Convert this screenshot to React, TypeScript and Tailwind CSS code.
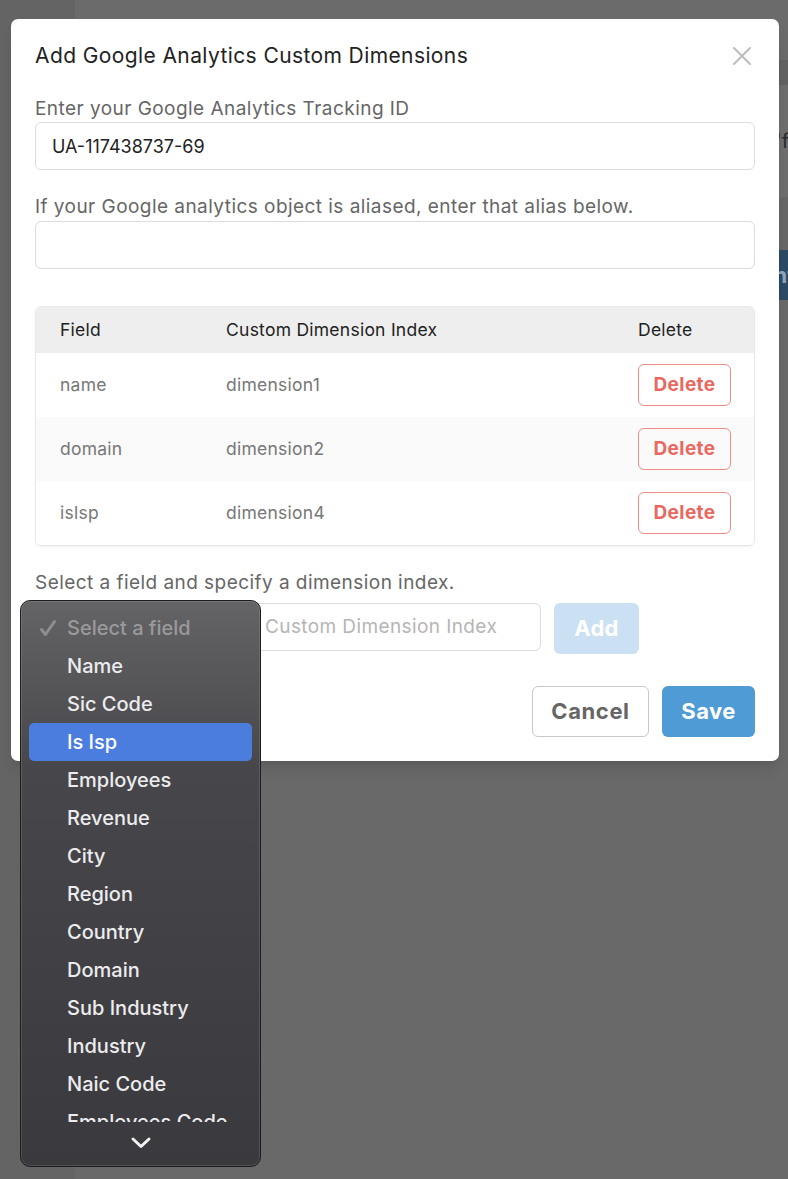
import React from "react";

const rows = [
  { field: "name", index: "dimension1" },
  { field: "domain", index: "dimension2" },
  { field: "isIsp", index: "dimension4", label: "islsp" },
];

const options = [
  "Name",
  "Sic Code",
  "Is Isp",
  "Employees",
  "Revenue",
  "City",
  "Region",
  "Country",
  "Domain",
  "Sub Industry",
  "Industry",
  "Naic Code",
  "Employees Code",
];

const FieldMenu = () => {
  return (
    <div className="absolute left-[20px] top-[600px] flex h-[567px] w-[241px] flex-col overflow-hidden rounded-[10px] border border-[#1c1c1e] bg-gradient-to-b from-[#646466] via-[#47474b] via-30% to-[#3a393e] shadow-[inset_0_0_0_1px_rgba(255,255,255,0.12)] font-['Inter',sans-serif]">
      <div className="h-[521px] shrink-0 overflow-hidden px-[8px] pt-[8px]">
        <div className="flex h-[38px] items-center text-[20px] font-medium text-[#9a9a9c]">
          <span className="flex w-[38px] justify-center">
            <svg width="20" height="20" viewBox="0 0 20 20" fill="none">
              <path d="M3.5 11.5 L7.5 16.5 L16.5 3.5" stroke="#8e8e90" strokeWidth="3" strokeLinecap="round" strokeLinejoin="round" />
            </svg>
          </span>
          Select a field
        </div>
        {options.map((o) => (
          <div
            key={o}
            className={
              o === "Is Isp"
                ? "flex h-[38px] items-center rounded-[5px] bg-[#4b7ddf] pl-[38px] text-[20px] font-medium text-white"
                : "flex h-[38px] items-center pl-[38px] text-[20px] font-medium text-[#ececee]"
            }
          >
            {o}
          </div>
        ))}
      </div>
      <div className="flex flex-1 items-center justify-center pb-[2px]">
        <svg width="22" height="14" viewBox="0 0 22 14" fill="none">
          <path d="M3 3 L11 10.5 L19 3" stroke="#f2f2f2" strokeWidth="3" strokeLinecap="round" strokeLinejoin="round" />
        </svg>
      </div>
    </div>
  );
};

const App = () => {
  return (
    <div className="relative h-[1179px] w-full overflow-hidden bg-[#6b6b6b] font-['Inter',sans-serif]">
      {/* dimmed page behind the modal */}
      <div className="flex h-full">
        <div className="w-[75px] bg-[#646464]" />
        <div className="flex flex-1 flex-col">
          <div className="h-[60px]" />
          <div className="h-[25px] bg-[#626262]" />
          <div className="flex h-[112px] items-center justify-end bg-[#6e6e6e] pr-0 text-[20px] text-[#2a2a2a]">
            <span className="-mr-[6px]">'fi</span>
          </div>
          <div className="h-[53px] bg-[#676767]" />
          <div className="flex h-[50px] items-center justify-end bg-[#2c4a66] text-[22px] font-bold text-[#8fa6bd]">
            <span className="-mr-[8px]">nf</span>
          </div>
          <div className="flex-1 bg-[#696969]" />
        </div>
      </div>

      <div className="absolute left-[11px] top-[19px] w-[768px] rounded-[7px] bg-white px-6 pb-6 pt-[23px] shadow-lg">
        <div className="flex h-[28px] items-center justify-between">
          <h2 className="text-[21px] font-normal tracking-[0.4px] text-[#222]">
            Add Google Analytics Custom Dimensions
          </h2>
          <svg width="20" height="20" viewBox="0 0 20 20" className="mr-[3px]" fill="none">
            <path d="M2 2 L18 18 M18 2 L2 18" stroke="#bdbdbd" strokeWidth="2" strokeLinecap="round" />
          </svg>
        </div>

        <label className="mt-[27px] block text-[19px] leading-[24px] tracking-[0.45px] text-[#666]">
          Enter your Google Analytics Tracking ID
        </label>
        <div className="mt-[1px] flex h-[48px] items-center rounded-[6px] border border-[#dcdcdc] px-4 text-[18px] text-[#222]">
          UA-117438737-69
        </div>

        <label className="mt-[25px] block text-[19px] leading-[24px] tracking-[0.45px] text-[#666]">
          If your Google analytics object is aliased, enter that alias below.
        </label>
        <div className="mt-[2px] h-[48px] rounded-[6px] border border-[#dcdcdc]" />

        <div className="mt-[37px] overflow-hidden rounded-[6px] border border-[#e8e8e8] shadow-[0_1px_2px_rgba(0,0,0,0.06)]">
          <div className="grid h-[46px] grid-cols-[190px_412px_1fr] items-center bg-[#eeeeee] text-[17.5px] tracking-[0.25px] text-[#222]">
            <div className="pl-6">Field</div>
            <div>Custom Dimension Index</div>
            <div>Delete</div>
          </div>
          {rows.map((r, i) => (
            <div
              key={r.field}
              className={
                i === 1
                  ? "grid h-[64px] grid-cols-[190px_412px_1fr] items-center bg-[#fafafa] text-[17.5px] tracking-[0.25px] text-[#777]"
                  : "grid h-[64px] grid-cols-[190px_412px_1fr] items-center bg-white text-[17.5px] tracking-[0.25px] text-[#777]"
              }
            >
              <div className="pl-6">{r.label ?? r.field}</div>
              <div>{r.index}</div>
              <div>
                <button className="flex h-[42px] w-[93px] items-center justify-center rounded-[6px] border border-[#f08c86] text-[19px] font-bold tracking-[0.4px] text-[#ea6860]">
                  Delete
                </button>
              </div>
            </div>
          ))}
        </div>

        <label className="mt-[25px] block text-[19px] leading-[24px] tracking-[0.45px] text-[#666]">
          Select a field and specify a dimension index.
        </label>
        <div className="mt-[8px] flex items-start gap-[13px]">
          <div className="h-[48px] w-[202px] rounded-[6px] border border-[#dcdcdc]" />
          <div className="flex h-[48px] w-[291px] items-center rounded-[6px] border border-[#dcdcdc] pl-[14px] text-[19px] tracking-[0.4px] text-[#b5b5b5]">
            Custom Dimension Index
          </div>
          <button className="h-[51px] w-[85px] rounded-[6px] bg-[#cce0f4] text-[22px] font-bold tracking-[0.3px] text-white">
            Add
          </button>
        </div>

        <div className="mt-[32px] flex justify-end gap-[13px]">
          <button className="h-[51px] w-[117px] rounded-[6px] border border-[#c8c8c8] text-[22px] font-bold tracking-[0.6px] text-[#666]">
            Cancel
          </button>
          <button className="h-[51px] w-[93px] rounded-[6px] bg-[#4f9bd6] text-[22px] font-bold tracking-[0.4px] text-white">
            Save
          </button>
        </div>
      </div>

      <FieldMenu />
    </div>
  );
};

export default App;
